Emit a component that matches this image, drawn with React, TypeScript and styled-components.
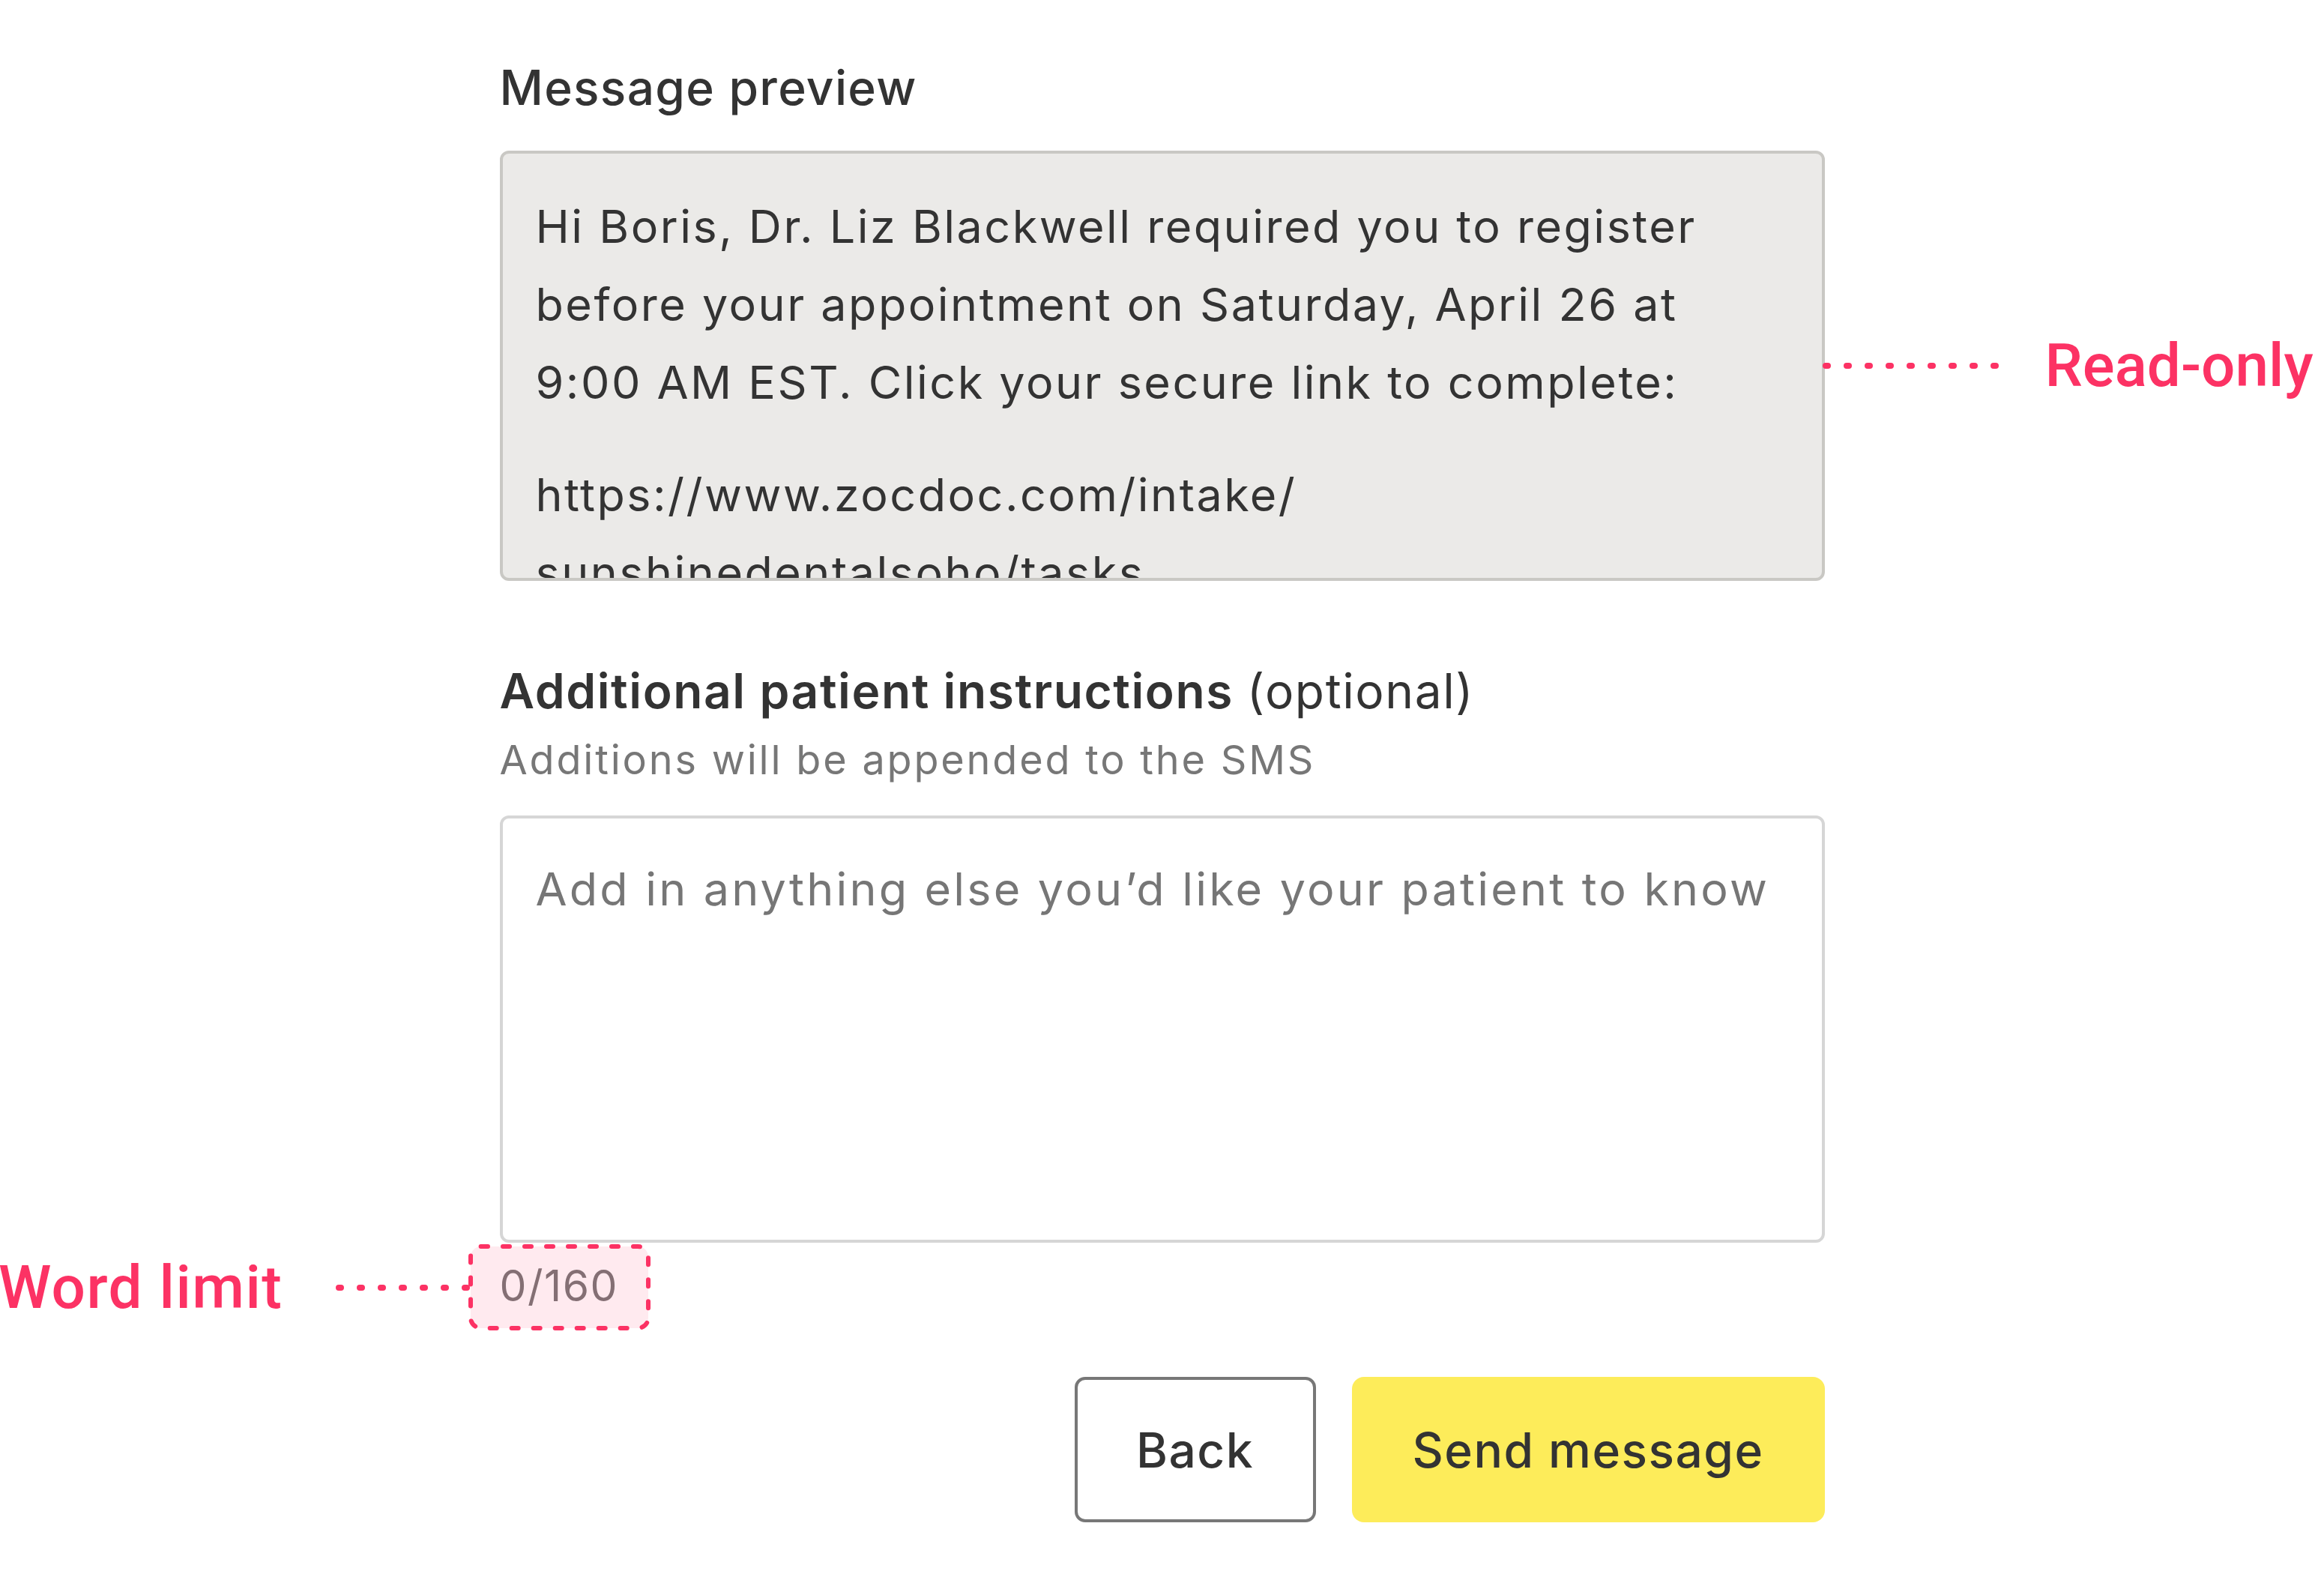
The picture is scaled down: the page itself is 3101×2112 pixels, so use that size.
import React from 'react';
import styled, { createGlobalStyle } from 'styled-components';

const ACCENT = '#fc3264';

const GlobalStyle = createGlobalStyle`
  html, body {
    margin: 0;
    padding: 0;
    background: #fff;
  }
  body {
    font-family: Inter, "Noto Sans", sans-serif;
    color: #333;
  }
`;

const Page = styled.main`
  width: 1768px;
  margin: 0 auto;
  padding-top: 77px;
`;

const Heading = styled.h2`
  margin: 0 0 44px;
  font-size: 64px;
  line-height: 80px;
  font-weight: 500;
  letter-spacing: 1.3px;
`;

const Anchor = styled.div`
  position: relative;
`;

const Preview = styled.div`
  box-sizing: border-box;
  height: 574px;
  overflow: hidden;
  padding: 45px 44px 0;
  background: #ebeae8;
  border: 4px solid #c9c8c4;
  border-radius: 12px;
  font-size: 61px;
  line-height: 104px;
  letter-spacing: 2.5px;
  white-space: nowrap;

  p {
    margin: 0;
  }
  p + p {
    margin-top: 46px;
  }
`;

const Callout = styled.div<{ $side: 'left' | 'right' }>`
  position: absolute;
  top: 50%;
  transform: translateY(-50%);
  display: flex;
  align-items: center;
  gap: ${(p) => (p.$side === 'right' ? '61px' : '69px')};
  ${(p) => (p.$side === 'right' ? 'left: calc(100% - 4px);' : 'right: calc(100% - 3px);')}
  font-family: Roboto, "Liberation Sans", sans-serif;
  font-size: 80px;
  font-weight: 500;
  color: ${ACCENT};
  white-space: nowrap;
  pointer-events: none;
`;

const FieldLabel = styled.div`
  margin-top: 107px;
  font-size: 64px;
  line-height: 80px;
  font-weight: 600;
  letter-spacing: 1.6px;

  span {
    font-weight: 400;
  }
`;

const Hint = styled.div`
  margin: 17px 0 39px;
  font-size: 54px;
  line-height: 70px;
  letter-spacing: 2.8px;
  color: #777;
`;

const Field = styled.textarea`
  display: block;
  box-sizing: border-box;
  width: 100%;
  height: 570px;
  margin: 0;
  padding: 42px 44px;
  border: 4px solid #d6d6d6;
  border-radius: 12px;
  resize: none;
  outline: none;
  background: #fff;
  font-family: inherit;
  font-size: 61px;
  line-height: 104px;
  letter-spacing: 3.2px;
  color: #333;

  &::placeholder {
    color: #767676;
    opacity: 1;
  }
`;

const CounterRow = styled.div`
  margin-top: 22px;
`;

const Counter = styled.span`
  position: relative;
  display: inline-block;
  font-size: 57px;
  line-height: 72px;
  letter-spacing: 1.5px;
  color: #767676;
`;

const DashFrame = styled.div`
  position: absolute;
  top: -20px;
  bottom: -23px;
  left: -42px;
  right: -43px;
  pointer-events: none;

  > svg {
    display: block;
  }
`;

const Actions = styled.div`
  display: flex;
  justify-content: flex-end;
  gap: 48px;
  margin-top: 85px;
`;

const Button = styled.button<{ $primary?: boolean }>`
  box-sizing: border-box;
  height: 194px;
  width: ${(p) => (p.$primary ? '631px' : '322px')};
  border: ${(p) => (p.$primary ? 'none' : '4px solid #777')};
  border-radius: ${(p) => (p.$primary ? '16px' : '14px')};
  background: ${(p) => (p.$primary ? '#fdec5a' : '#fff')};
  color: #333;
  font-family: inherit;
  font-size: 64px;
  font-weight: 500;
  letter-spacing: 1.5px;
  cursor: pointer;
`;

const DOT_STEP = 28;

const Dots = ({ count }: { count: number }) => {
  const width = (count - 1) * DOT_STEP + 13;
  return (
    <svg width={width} height={10} viewBox={`0 0 ${width} 10`}>
      <line
        x1={5}
        y1={5}
        x2={width - 5}
        y2={5}
        stroke={ACCENT}
        strokeWidth={8}
        strokeLinecap="round"
        strokeDasharray={`3 ${DOT_STEP - 3}`}
      />
    </svg>
  );
};

export default function App() {
  return (
    <>
      <GlobalStyle />
      <Page>
        <Heading>Message preview</Heading>
        <Anchor>
          <Preview>
            <p>
              Hi Boris, Dr. Liz Blackwell required you to register
              <br />
              before your appointment on Saturday, April 26 at
              <br />
              9:00 AM EST. Click your secure link to complete:
            </p>
            <p>
              https://www.zocdoc.com/intake/
              <br />
              sunshinedentalsoho/tasks
            </p>
          </Preview>
          <Callout $side="right">
            <Dots count={9} />
            Read-only
          </Callout>
        </Anchor>

        <FieldLabel>
          Additional patient instructions <span>(optional)</span>
        </FieldLabel>
        <Hint>Additions will be appended to the SMS</Hint>
        <Field placeholder="Add in anything else you’d like your patient to know" />

        <CounterRow>
          <Counter>
            0/160
            <DashFrame>
              <svg width={243} height={115} viewBox="0 0 243 115">
                <rect
                  x={3}
                  y={3}
                  width={237}
                  height={109}
                  rx={14}
                  fill="rgba(252, 50, 100, 0.1)"
                  stroke={ACCENT}
                  strokeWidth={6}
                  strokeLinecap="round"
                  strokeDasharray="9 20"
                />
              </svg>
              <Callout $side="left">
                Word limit
                <Dots count={7} />
              </Callout>
            </DashFrame>
          </Counter>
        </CounterRow>

        <Actions>
          <Button>Back</Button>
          <Button $primary>Send message</Button>
        </Actions>
      </Page>
    </>
  );
}
